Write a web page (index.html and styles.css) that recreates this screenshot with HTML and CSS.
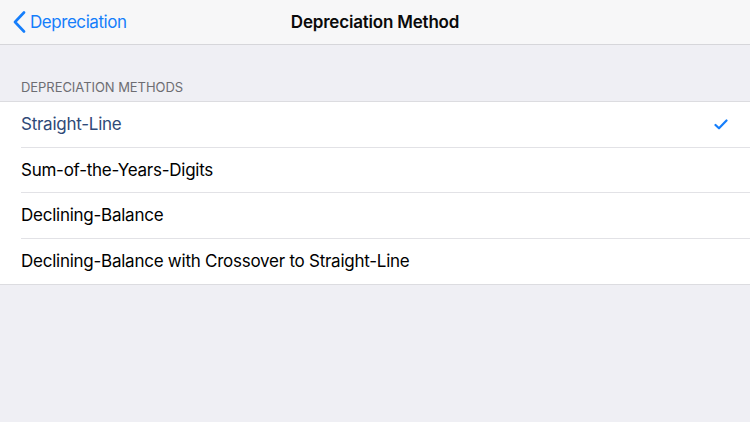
FILE: index.html
```
<!DOCTYPE html>
<html>
<head>
<meta charset="utf-8">
<link rel="stylesheet" href="styles.css">
</head>
<body>
<div class="nav">
  <div class="back">
    <svg class="chev" width="13" height="22" viewBox="0 0 13 22"><path d="M11 1.5 L2 11 L11 20.5" fill="none" stroke="#157efb" stroke-width="2.6" stroke-linecap="round" stroke-linejoin="round"/></svg>
    <span>Depreciation</span>
  </div>
  <div class="title">Depreciation Method</div>
</div>
<div class="section-header">DEPRECIATION METHODS</div>
<div class="list">
  <div class="row selected"><span>Straight-Line</span>
    <svg class="check" width="14" height="11" viewBox="0 0 14 11"><path d="M1.5 6 L5 9.3 L12.5 1.5" fill="none" stroke="#157efb" stroke-width="2.2" stroke-linecap="round" stroke-linejoin="round"/></svg>
  </div>
  <div class="row"><span>Sum-of-the-Years-Digits</span></div>
  <div class="row"><span>Declining-Balance</span></div>
  <div class="row"><span>Declining-Balance with Crossover to Straight-Line</span></div>
</div>
</body>
</html>
```
FILE: styles.css
```
* { box-sizing: border-box; }
html, body { margin: 0; padding: 0; }
body {
  width: 750px; height: 422px; overflow: hidden;
  background: #efeff4;
  font-family: Inter, "Open Sans", Roboto, sans-serif;
  -webkit-font-smoothing: antialiased;
}
.nav {
  height: 45px;
  background: #f7f7f8;
  border-bottom: 1px solid #d6d6da;
  display: flex; align-items: center; justify-content: center;
  position: relative;
}
.back {
  position: absolute; left: 13px; top: 0; height: 44px;
  display: flex; align-items: center; gap: 4px;
  color: #157efb; font-size: 17px; letter-spacing: -0.45px;
}
.chev { display: block; }
.title { font-size: 17px; font-weight: 600; color: #0a0a0a; letter-spacing: -0.2px; }
.section-header {
  padding: 34px 21px 6px;
  font-size: 13px; color: #6d6d72; letter-spacing: -0.05px;
  line-height: 16px;
}
.list {
  background: #fff;
  border-top: 1px solid #dcdce0;
  border-bottom: 1px solid #dcdce0;
}
.row {
  height: 45.5px;
  margin-left: 21px;
  padding-right: 21px;
  display: flex; align-items: center; justify-content: space-between;
  font-size: 17px; color: #000;
  border-bottom: 1px solid #e2e2e6;
  letter-spacing: -0.25px;
}
.row:last-child { border-bottom: none; }
.row.selected { color: #2f4a78; }
.check { margin-right: 1px; }
```
